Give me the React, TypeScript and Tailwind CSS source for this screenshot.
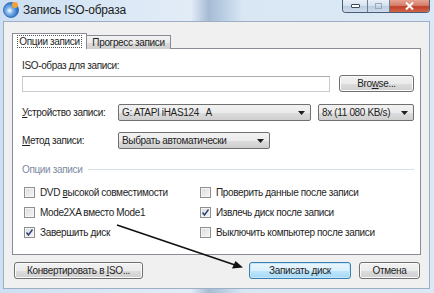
import type { ReactNode } from 'react';

const txt = 'text-[10px] tracking-[-0.35px] whitespace-nowrap';

function Btn({ children, className = '', focused = false }: { children: ReactNode; className?: string; focused?: boolean }) {
  return (
    <div
      className={
        'h-[17px] flex items-center justify-center rounded-[3px] border leading-none text-[#1e1e1e] ' +
        txt +
        ' ' +
        (focused
          ? 'border-[#3c7fb1] bg-[linear-gradient(180deg,#eaf6fd_0%,#d9f0fc_50%,#bee6fd_51%,#a7d9f5_100%)] shadow-[inset_0_0_0_1px_#c5e6f8]'
          : 'border-[#707070] bg-[linear-gradient(180deg,#f2f2f2_0%,#ebebeb_50%,#dddddd_51%,#cfcfcf_100%)] shadow-[inset_0_0_0_1px_#fbfbfb]') +
        ' ' +
        className
      }
    >
      <span>{children}</span>
    </div>
  );
}

function Combo({ text, className = '' }: { text: string; className?: string }) {
  return (
    <div
      className={
        'h-[17px] flex items-center rounded-[2px] border border-[#707070] bg-[linear-gradient(180deg,#f2f2f2_0%,#ebebeb_50%,#dddddd_51%,#cfcfcf_100%)] pl-[3px] pr-[5px] text-[#1e1e1e] ' +
        txt +
        ' ' +
        className
      }
    >
      <span className="flex-1 whitespace-pre">{text}</span>
      <svg width="7" height="4" viewBox="0 0 7 4">
        <path d="M0 0H7L3.5 4Z" fill="#1e1e1e" />
      </svg>
    </div>
  );
}

function Check({ checked = false, children }: { checked?: boolean; children: ReactNode }) {
  return (
    <div className="h-[20px] flex items-center">
      <div className="ml-[2px] w-[11px] h-[11px] border border-[#8e8f8f] bg-[linear-gradient(135deg,#dcdcdc_0%,#f6f6f6_100%)] flex items-center justify-center shadow-[inset_0_0_0_1px_#f4f4f4]">
        {checked && (
          <svg width="9" height="9" viewBox="0 0 9 9">
            <path d="M1.5 4.5L3.5 7L7.5 1.5" stroke="#2c3f78" strokeWidth="1.4" fill="none" />
          </svg>
        )}
      </div>
      <span className={'ml-[5px] text-[#1e1e1e] ' + txt}>{children}</span>
    </div>
  );
}

export default function App() {
  return (
    <div className="relative w-[434px] h-[293px] overflow-hidden flex flex-col font-['Liberation_Sans',sans-serif] bg-[linear-gradient(90deg,#cddff2_0%,#dce9f6_30%,#e2ecf7_44%,#a7bcd4_48%,#b7cbe0_51%,#d9e7f5_56%,#dbe8f5_100%)]">
      {/* Title bar */}
      <div className="h-[21px] flex items-start">
        <div className="mt-[2px] ml-[3px] w-[16px] h-[16px] rounded-full bg-[radial-gradient(circle_at_40%_55%,#ffffff_0%,#7fb4ea_30%,#2d6fc4_70%,#1b4f9a_100%)] relative border border-[#3a6fb5]">
          <div className="absolute -top-[1px] right-[0px] w-[6px] h-[6px] rounded-full bg-[#f2a23a]" />
        </div>
        <span className="ml-[4px] mt-[3px] text-[12px] leading-[14px] text-[#1b1b1b] tracking-[-0.2px]">Запись ISO-образа</span>
        <div className="ml-auto mr-[4px] flex h-[13px] rounded-b-[4px] border border-t-0 border-[#4a5b74] overflow-hidden">
          <div className="w-[25px] flex items-center justify-center border-r border-[#6b7d96] bg-[linear-gradient(180deg,#e9f0f8_0%,#d3e0ee_50%,#bccde1_51%,#cedcec_100%)]">
            <div className="w-[9px] h-[4px] rounded-[1px] border border-[#3b4a60] bg-white" />
          </div>
          <div className="w-[22px] flex items-center justify-center border-r border-[#6b7d96] bg-[linear-gradient(180deg,#e9f0f8_0%,#d3e0ee_50%,#bccde1_51%,#cedcec_100%)]">
            <div className="w-[7px] h-[6px] border border-[#9aa8ba]" />
          </div>
          <div className="w-[39px] flex items-center justify-center bg-[linear-gradient(180deg,#e8a393_0%,#d47f6a_45%,#c2402a_55%,#d0664a_100%)]">
            <svg width="9" height="8" viewBox="0 0 9 8">
              <path d="M1 0.5L8 7.5M8 0.5L1 7.5" stroke="#ffffff" strokeWidth="2" />
            </svg>
          </div>
        </div>
      </div>

      {/* Client area */}
      <div className="ml-[3px] mr-[4px] mb-[4px] flex-1 border border-[#9eaec4] bg-[#f0f0f0] px-[8px] pt-[11px] flex flex-col">
        {/* Tabs */}
        <div className="flex items-end h-[16px] relative z-10">
          <div className="h-[16px] w-[75px] border border-b-0 border-[#898c95] bg-white flex items-center justify-center">
            <span className={'px-[1px] border border-dotted border-[#555] leading-[11px] text-[#1e1e1e] ' + txt}>Опции записи</span>
          </div>
          <div className={'h-[14px] w-[84px] border border-l-0 border-b-0 border-[#898c95] bg-[linear-gradient(180deg,#f2f2f2_0%,#ebebeb_50%,#dddddd_51%,#cfcfcf_100%)] flex items-center justify-center text-[#1e1e1e] ' + txt}>
            Прогресс записи
          </div>
        </div>

        {/* Panel */}
        <div className={'-mt-[1px] border border-[#898c95] bg-white pl-[9px] pr-[6px] pt-[11px] pb-[12px] text-[#1e1e1e] ' + txt}>
          <div className="h-[12px] leading-[12px]">ISO-образ для записи:</div>
          <div className="mt-[3px] flex items-center">
            <div className="w-[308px] h-[16px] border border-[#c8ccd2] border-t-[#abadb3] bg-white" />
            <Btn className="ml-auto w-[75px]">
              Bro<span className="underline">w</span>se...
            </Btn>
          </div>
          <div className="mt-[12px] flex items-center">
            <div className="w-[96px]">
              <span className="underline">У</span>стройство записи:
            </div>
            <Combo text="G: ATAPI iHAS124   A" className="w-[193px]" />
            <Combo text="8x (11 080 KB/s)" className="ml-auto w-[96px]" />
          </div>
          <div className="mt-[11px] flex items-center">
            <div className="w-[96px]">
              <span className="underline">М</span>етод записи:
            </div>
            <Combo text="Выбрать автоматически" className="w-[152px]" />
          </div>
          <div className="mt-[14px] h-[12px] flex items-center">
            <span className="text-[#7d8ba3]">Опции записи</span>
            <div className="ml-[6px] flex-1 h-px bg-[#d5dfe5]" />
          </div>
          <div className="mt-[7px] grid grid-cols-[176px_1fr]">
            <div>
              <Check>
                DVD <span className="underline">в</span>ысокой совместимости
              </Check>
              <Check>Mode2XA вместо Mode1</Check>
              <Check checked>Завершить диск</Check>
            </div>
            <div>
              <Check>Проверить данные после записи</Check>
              <Check checked>Извлечь диск после записи</Check>
              <Check>Выключить компьютер после записи</Check>
            </div>
          </div>
        </div>

        {/* Bottom buttons */}
        <div className="mt-[7px] flex items-center">
          <Btn className="ml-[2px] w-[129px]">
            Конвертировать в <span className="underline">I</span>SO...
          </Btn>
          <Btn focused className="ml-auto w-[102px]">
            Записать диск
          </Btn>
          <Btn className="ml-[8px] mr-[1px] w-[61px]">Отмена</Btn>
        </div>
      </div>

      {/* Annotation arrow */}
      <svg className="absolute left-0 top-0 pointer-events-none" width="434" height="293" viewBox="0 0 434 293">
        <line x1="117" y1="225" x2="238" y2="266" stroke="#111" strokeWidth="1.6" />
        <path d="M243 267.5L232 268.5L235.5 261Z" fill="#111" />
      </svg>
    </div>
  );
}
